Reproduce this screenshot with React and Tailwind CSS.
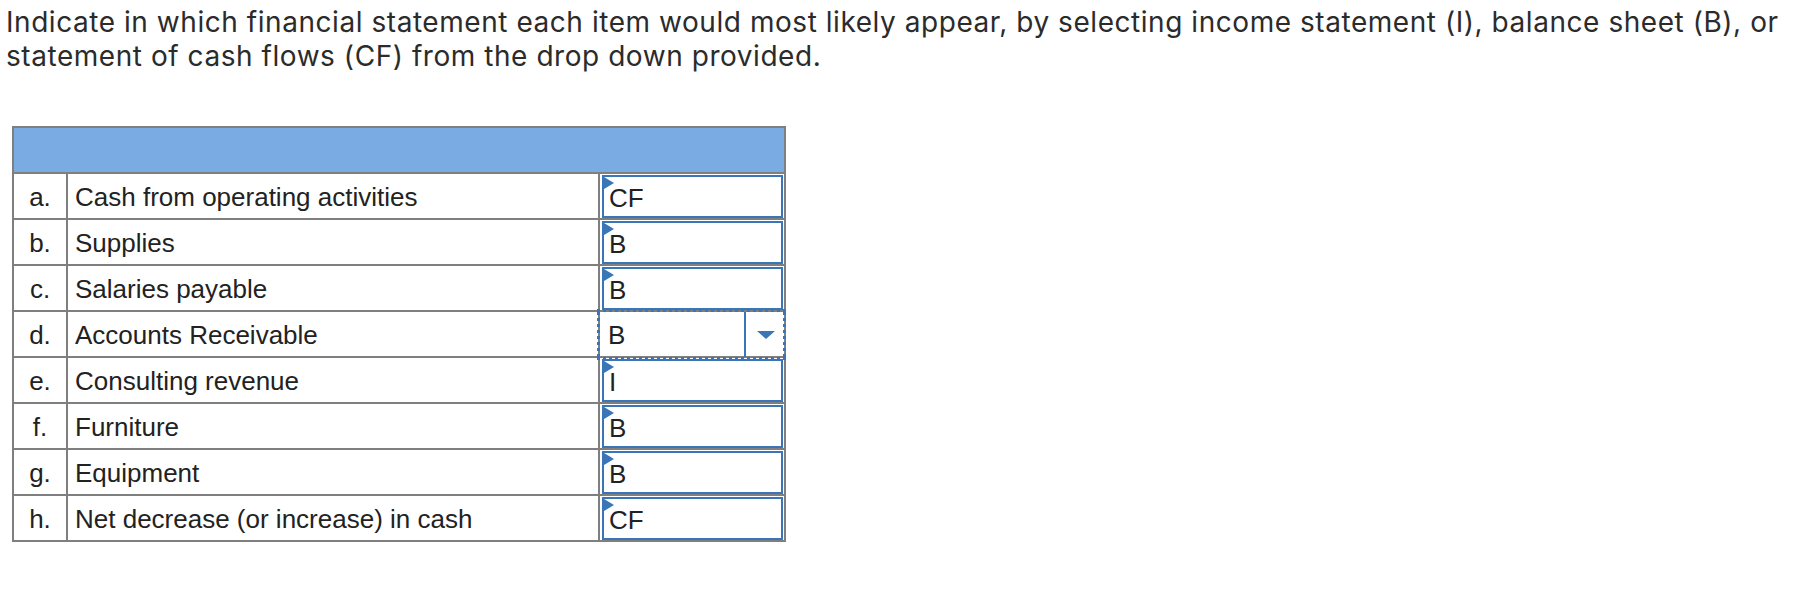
import React from "react";

const rows = [
  ["a.", "Cash from operating activities", "CF"],
  ["b.", "Supplies", "B"],
  ["c.", "Salaries payable", "B"],
  ["d.", "Accounts Receivable", "B"],
  ["e.", "Consulting revenue", "I"],
  ["f.", "Furniture", "B"],
  ["g.", "Equipment", "B"],
  ["h.", "Net decrease (or increase) in cash", "CF"],
];

function Flag() {
  return (
    <svg className="absolute left-0 top-0" width="10" height="12" viewBox="0 0 10 12">
      <polygon points="0,0 10,6 0,12" fill="#3a75b8" />
    </svg>
  );
}

export default function App() {
  return (
    <div className="bg-white min-h-[590px] w-[1806px] text-[#222]">
      <div
        className="pl-[6px] pt-[5px] text-[28px] leading-[34px] tracking-[0.55px] text-[#2b2b2b]"
        style={{ fontFamily: "Inter, 'Open Sans', sans-serif" }}
      >
        Indicate in which financial statement each item would most likely appear, by selecting income statement (I), balance sheet (B), or
        <br />
        statement of cash flows (CF) from the drop down provided.
      </div>

      <div
        className="ml-[12px] mt-[53px] w-[774px] border-2 border-[#7f7f7f]"
        style={{ fontFamily: "'Liberation Sans', Arial, sans-serif" }}
      >
        <div className="h-[44px] bg-[#7aace3]" />
        {rows.map(([k, label, val], i) => (
          <div key={k} className="flex h-[46px] border-t-2 border-[#7f7f7f] text-[26px]">
            <div className="w-[54px] flex items-center justify-center pt-[3px] border-r-2 border-[#7f7f7f]">
              {k}
            </div>
            <div className="w-[532px] flex items-center pl-[7px] pt-[3px] border-r-2 border-[#7f7f7f]">
              {label}
            </div>
            <div className="relative flex-1">
              {i === 3 ? (
                <div className="absolute left-[-3px] right-[-2px] top-[-3px] bottom-[-4px] flex items-center">
                  <svg className="absolute inset-0 w-full h-full">
                    <rect x="0" y="0" width="100%" height="100%" fill="none" stroke="#3a75b8" strokeWidth="6" strokeDasharray="3 3" />
                  </svg>
                  <div className="flex-1 pl-[11px] pt-[2px]">{val}</div>
                  <div className="w-[2px] self-stretch my-[3px] bg-[#3a75b8]" />
                  <div className="w-[40px] flex items-center justify-center">
                    <svg width="18" height="8" viewBox="0 0 18 8">
                      <polygon points="0,0 18,0 9,8" fill="#3a75b8" />
                    </svg>
                  </div>
                </div>
              ) : (
                <div className="relative ml-[2px] mr-[1px] mt-[1px] h-[43px] border-2 border-[#3a75b8] flex items-center pl-[5px]">
                  <Flag />
                  <span className="pt-[4px]">{val}</span>
                </div>
              )}
            </div>
          </div>
        ))}
      </div>
    </div>
  );
}
